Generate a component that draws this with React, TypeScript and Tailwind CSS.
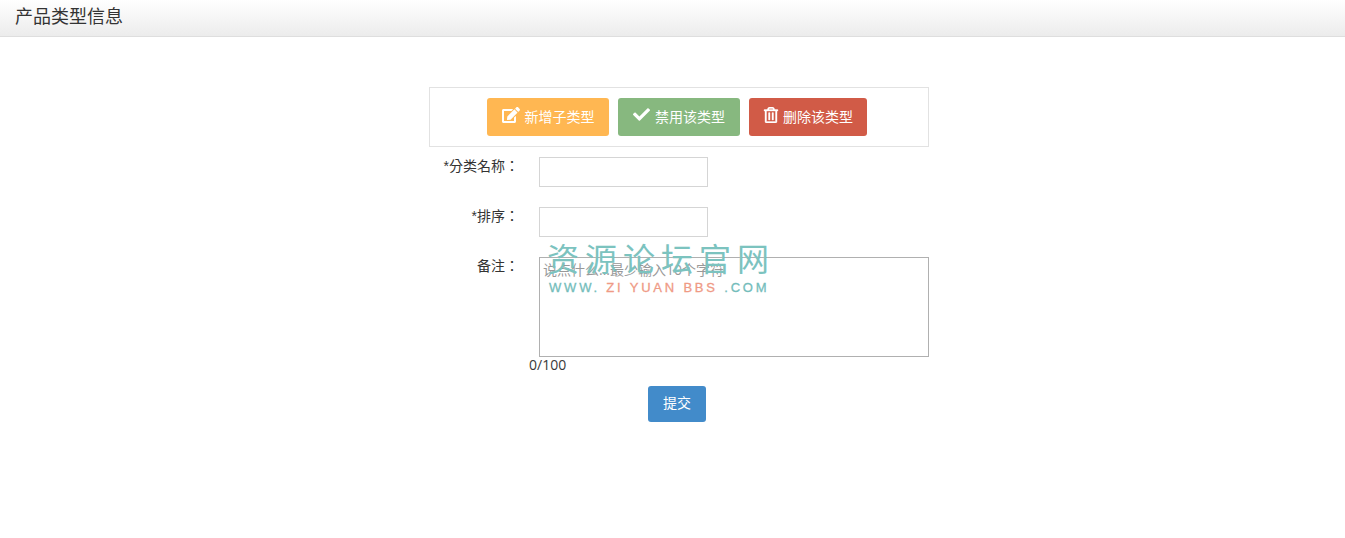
import React from "react";
import { FaCheck, FaEdit, FaRegTrashAlt } from "react-icons/fa";

const fontStack = "font-['Open_Sans','Noto_Sans_CJK_SC',sans-serif]";

const FormRow = ({ label, required, children }: { label: string; required?: boolean; children: React.ReactNode }) => (
  <div className="flex">
    <label className="w-[90px] shrink-0 text-right text-[14px] leading-[16px] text-[#333] font-['Noto_Sans_CJK_TC',sans-serif]">
      {required && <span className="text-[14px] font-['Liberation_Sans',sans-serif]">*</span>}
      {label}
    </label>
    <div className="ml-[20px]">{children}</div>
  </div>
);

const App = () => (
  <div className={`relative h-[538px] bg-white overflow-hidden ${fontStack}`}>
    <header className="h-[37px] border-b border-[#dedede] bg-gradient-to-b from-white to-[#ececec] pl-[15px]">
      <h1 className="text-[18px] leading-[32px] font-normal text-[#333]">产品类型信息</h1>
    </header>

    <section className="relative w-[500px] mt-[50px] ml-[429px]">
      <div className="h-[60px] border border-[#e2e2e2] flex items-center justify-center gap-[9px] pr-[4px]">
        <button className="flex items-center justify-center gap-[5px] w-[122px] h-[38px] pb-[2px] rounded-[3px] bg-[#ffb752] text-white text-[14px]">
          <FaEdit className="text-[18px] -mt-[3px]" />
          新增子类型
        </button>
        <button className="flex items-center justify-center gap-[5px] w-[122px] h-[38px] pb-[2px] rounded-[3px] bg-[#87b87f] text-white text-[14px]">
          <FaCheck className="text-[17px] -mt-[3px]" />
          禁用该类型
        </button>
        <button className="flex items-center justify-center gap-[4px] w-[118px] h-[38px] pb-[2px] rounded-[3px] bg-[#d15b47] text-white text-[14px]">
          <FaRegTrashAlt className="text-[16px] -mt-[3px] stroke-[12]" />
          删除该类型
        </button>
      </div>

      <div className="flex flex-col gap-[20px] mt-[10px]">
        <FormRow label="分类名称：" required>
          <input className="block w-[169px] h-[30px] border border-[#d5d5d5] bg-white" />
        </FormRow>
        <FormRow label="排序：" required>
          <input className="block w-[169px] h-[30px] border border-[#d5d5d5] bg-white" />
        </FormRow>
        <FormRow label="备注：">
          <textarea
            className="block w-[390px] h-[100px] border border-[#b0b0b0] px-[3px] py-[2px] text-[14px] leading-[20px] text-[#333] placeholder:text-[#999] resize-none outline-none"
            placeholder="说点什么...最少输入10个字符"
          />
        </FormRow>
      </div>

      <div className="ml-[100px] text-[14px] leading-[16px] text-[#393939]">0/100</div>

      <div className="flex mt-[13px] ml-[219px]">
        <button className="w-[58px] h-[36px] pb-[3px] rounded-[3px] bg-[#428bca] text-white text-[14px]">提交</button>
      </div>

      {/* watermark over the form */}
      <div className="absolute left-[118px] top-[150px] w-[224px] pointer-events-none select-none">
        <div className="text-[32px] leading-[40px] tracking-[6px] whitespace-nowrap text-[#7cc3bf] font-['Noto_Sans_CJK_SC',sans-serif] font-normal">
          资源论坛官网
        </div>
        <div className="ml-[2px] mt-[3px] text-[13px] leading-[16px] tracking-[2.8px] whitespace-nowrap font-['Liberation_Sans',sans-serif] text-[#74bdbb] [-webkit-text-stroke:0.3px]">
          WWW. <span className="text-[#ef9a85]">ZI YUAN BBS</span> .COM
        </div>
      </div>
    </section>
  </div>
);

export default App;
